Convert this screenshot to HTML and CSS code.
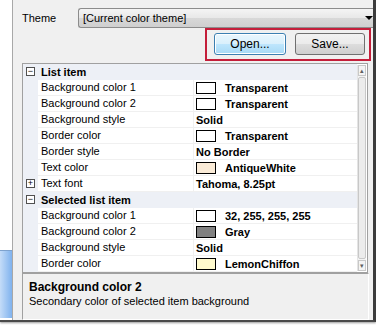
FILE: index.html
```html
<!DOCTYPE html>
<html lang="en">
<head>
    <meta charset="UTF-8">
    <title>Theme settings</title>
    <link rel="stylesheet" href="styles.css">
</head>
<body>

    <div class="window">
        <div class="side-panel">
            <div class="side-selected"></div>
        </div>

        <div class="main">
            <div class="theme-row">
                <label for="themeSelect">Theme</label>
                <div class="combo" id="themeSelect">
                    <span>[Current color theme]</span>
                    <span class="combo-arrow"></span>
                </div>
            </div>

            <div class="button-row">
                <div class="highlight">
                    <button class="btn btn-focus">Open...</button>
                    <button class="btn">Save...</button>
                </div>
            </div>

            <div class="grid">
                <div class="grid-rows">
                    <div class="row category">
                        <span class="margin"><span class="toggle">&minus;</span></span>
                        <span class="cat-name">List item</span>
                    </div>
                    <div class="row">
                        <span class="margin"></span>
                        <span class="name">Background color 1</span>
                        <span class="value"><span class="swatch"></span>Transparent</span>
                    </div>
                    <div class="row">
                        <span class="margin"></span>
                        <span class="name">Background color 2</span>
                        <span class="value"><span class="swatch"></span>Transparent</span>
                    </div>
                    <div class="row">
                        <span class="margin"></span>
                        <span class="name">Background style</span>
                        <span class="value">Solid</span>
                    </div>
                    <div class="row">
                        <span class="margin"></span>
                        <span class="name">Border color</span>
                        <span class="value"><span class="swatch"></span>Transparent</span>
                    </div>
                    <div class="row">
                        <span class="margin"></span>
                        <span class="name">Border style</span>
                        <span class="value">No Border</span>
                    </div>
                    <div class="row">
                        <span class="margin"></span>
                        <span class="name">Text color</span>
                        <span class="value"><span class="swatch swatch-antique"></span>AntiqueWhite</span>
                    </div>
                    <div class="row">
                        <span class="margin"><span class="toggle">+</span></span>
                        <span class="name">Text font</span>
                        <span class="value">Tahoma, 8.25pt</span>
                    </div>
                    <div class="row category">
                        <span class="margin"><span class="toggle">&minus;</span></span>
                        <span class="cat-name">Selected list item</span>
                    </div>
                    <div class="row">
                        <span class="margin"></span>
                        <span class="name">Background color 1</span>
                        <span class="value"><span class="swatch"></span>32, 255, 255, 255</span>
                    </div>
                    <div class="row">
                        <span class="margin"></span>
                        <span class="name">Background color 2</span>
                        <span class="value"><span class="swatch swatch-gray"></span>Gray</span>
                    </div>
                    <div class="row">
                        <span class="margin"></span>
                        <span class="name">Background style</span>
                        <span class="value">Solid</span>
                    </div>
                    <div class="row">
                        <span class="margin"></span>
                        <span class="name">Border color</span>
                        <span class="value"><span class="swatch swatch-lemon"></span>LemonChiffon</span>
                    </div>
                </div>
                <div class="scrollbar">
                    <span class="scroll-btn">&#9652;</span>
                    <span class="scroll-thumb"></span>
                    <span class="scroll-btn">&#9662;</span>
                </div>
            </div>

            <div class="description">
                <div class="desc-title">Background color 2</div>
                <div class="desc-text">Secondary color of selected item background</div>
            </div>
        </div>
    </div>

</body>
</html>
```

FILE: styles.css
```css
body {
    margin: 0;
    width: 376px;
    height: 326px;
    background-color: #ffffff;
    font-family: "Liberation Sans", Arial, sans-serif;
    font-size: 11px;
    color: #000;
    overflow: hidden;
}
.window {
    display: flex;
    height: 320px;
    background-color: #f0f0f0;
    border-right: 3px solid #3c3c3c;
    border-bottom: 2px solid #4a4a4a;
    box-shadow: 0 1px 2px rgba(0,0,0,0.4);
}

/* left list strip */
.side-panel {
    width: 12px;
    background-color: #ffffff;
    border-right: 1px solid #a8a8a8;
    display: flex;
    flex-direction: column;
    justify-content: flex-end;
}
.side-selected {
    height: 67px;
    margin-bottom: 2px;
    background: linear-gradient(to right, #c4dcf8, #7fb2ee);
    border-top: 1px solid #7da2ce;
}

.main {
    flex: 1;
    padding: 8px 0 0 9px;
    display: flex;
    flex-direction: column;
}

/* theme combobox */
.theme-row {
    display: flex;
    align-items: center;
    height: 20px;
}
.theme-row label {
    width: 56px;
}
.combo {
    flex: 1;
    height: 18px;
    display: flex;
    align-items: center;
    justify-content: space-between;
    padding-left: 4px;
    border: 1px solid #8c8c8c;
    border-right: none;
    border-radius: 3px 0 0 3px;
    background: linear-gradient(#f4f4f4, #e8e8e8 50%, #d8d8d8 51%, #cfcfcf);
}
.combo-arrow {
    width: 0;
    height: 0;
    border-left: 4px solid transparent;
    border-right: 4px solid transparent;
    border-top: 4px solid #000;
}

/* buttons with the red marker */
.button-row {
    display: flex;
    justify-content: flex-end;
    padding-right: 2px;
}
.highlight {
    display: flex;
    gap: 9px;
    padding: 3px 4px 4px 7px;
    border: 2px solid #c41e3a;
}
.btn {
    width: 72px;
    height: 22px;
    padding: 0;
    font: inherit;
    font-size: 12px;
    border: 1px solid #707070;
    border-radius: 3px;
    background: linear-gradient(#f2f2f2, #ebebeb 50%, #dddddd 51%, #cfcfcf);
}
.btn + .btn {
    width: 70px;
}
.btn-focus {
    border-color: #3c7fb1;
    background: linear-gradient(#eaf6fd, #d9f0fc 50%, #bee6fd 51%, #a7d9f5);
    box-shadow: inset 0 0 0 1px #ffffff;
}

/* property grid */
.grid {
    display: flex;
    width: 344px;
    margin-top: 2px;
    border: 1px solid #a0a0a0;
    background-color: #ffffff;
}
.grid-rows {
    flex: 1;
}
.row {
    display: flex;
    align-items: center;
    height: 15px;
    border-bottom: 1px solid #f0f0f0;
}
.margin {
    width: 15px;
    height: 16px;
    display: flex;
    align-items: center;
    justify-content: center;
    background-color: #edf0f6;
    margin-right: 3px;
}
.toggle {
    width: 7px;
    height: 7px;
    border: 1px solid #505050;
    background: #fff;
    font-size: 9px;
    line-height: 6px;
    text-align: center;
    color: #000;
}
.name {
    width: 152px;
    border-right: 1px solid #f0f0f0;
    height: 15px;
    line-height: 15px;
}
.value {
    display: flex;
    align-items: center;
    padding-left: 2px;
    font-weight: bold;
}
.category {
    background-color: #edf0f6;
    border-bottom-color: #edf0f6;
}
.cat-name {
    font-weight: bold;
}
.swatch {
    width: 18px;
    height: 10px;
    border: 1px solid #000;
    background: #fff;
    margin-right: 9px;
}
.swatch-antique { background: #faebd7; }
.swatch-gray { background: #808080; }
.swatch-lemon { background: #fffacd; }

.scrollbar {
    width: 8px;
    margin: 1px 1px 1px 0;
    display: flex;
    flex-direction: column;
    background-color: #f4f4f4;
    border-left: 1px solid #e4e4e4;
}
.scroll-btn {
    height: 9px;
    font-size: 7px;
    line-height: 9px;
    text-align: center;
    color: #606060;
    border: 1px solid #c8c8c8;
}
.scroll-thumb {
    flex: 1;
    margin: 1px 0;
    border: 1px solid #c8c8c8;
    border-radius: 2px;
    background: #ececec;
}

/* description pane */
.description {
    width: 334px;
    height: 40px;
    padding: 6px 5px 0 6px;
    border-top: 1px solid #a0a0a0;
    border-left: 1px solid #a0a0a0;
    border-right: 1px solid #ffffff;
    border-bottom: 1px solid #ffffff;
}
.desc-title {
    font-weight: bold;
    font-size: 12px;
    line-height: 14px;
}
.desc-text {
    line-height: 14px;
}
```
